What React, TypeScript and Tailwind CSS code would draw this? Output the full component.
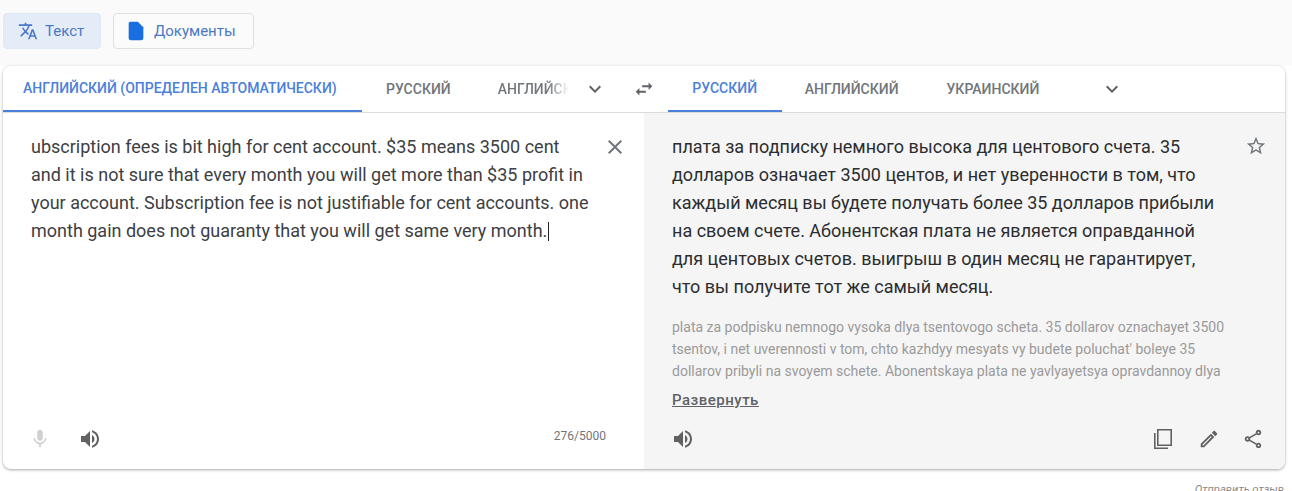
const iconPaths = {
  translate:
    "M12.87 15.07l-2.54-2.51.03-.03c1.74-1.94 2.98-4.17 3.71-6.53H17V4h-7V2H8v2H1v1.99h11.17C11.5 7.92 10.44 9.75 9 11.35 8.07 10.32 7.3 9.19 6.69 8h-2c.73 1.63 1.73 3.17 2.98 4.56l-5.09 5.02L4 19l5-5 3.11 3.11.76-2.04zM18.5 10h-2L12 22h2l1.12-3h4.75L21 22h2l-4.5-12zm-2.62 7l1.62-4.33L19.12 17h-3.24z",
  file: "M14 2H6c-1.1 0-2 .9-2 2v16c0 1.1.9 2 2 2h12c1.1 0 2-.9 2-2V8l-6-6z",
  swap: "M6.99 11L3 15l3.99 4v-3H14v-2H6.99v-3zM21 9l-3.99-4v3H10v2h7.01v3L21 9z",
  chevron: "M7.41 8.59L12 13.17l4.59-4.58L18 10l-6 6-6-6 1.41-1.41z",
  close: "M19 6.41L17.59 5 12 10.59 6.41 5 5 6.41 10.59 12 5 17.59 6.41 19 12 13.41 17.59 19 19 17.59 13.41 12 19 6.41z",
  star: "M22 9.24l-7.19-.62L12 2 9.19 8.63 2 9.24l5.46 4.73L5.82 21 12 17.27 18.18 21l-1.63-7.03L22 9.24zM12 15.4l-3.76 2.27 1-4.28-3.32-2.88 4.38-.38L12 6.1l1.71 4.04 4.38.38-3.32 2.88 1 4.28L12 15.4z",
  mic: "M12 14c1.66 0 3-1.34 3-3V5c0-1.66-1.34-3-3-3S9 3.34 9 5v6c0 1.66 1.34 3 3 3zm5.3-3c0 3-2.54 5.1-5.3 5.1S6.7 14 6.7 11H5c0 3.41 2.72 6.23 6 6.72V21h2v-3.28c3.28-.48 6-3.3 6-6.72h-1.7z",
  volume:
    "M3 9v6h4l5 5V4L7 9H3zm13.5 3c0-1.77-1.02-3.29-2.5-4.03v8.05c1.48-.73 2.5-2.25 2.5-4.02zM14 3.23v2.06c2.89.86 5 3.54 5 6.71s-2.11 5.85-5 6.71v2.06c4.01-.91 7-4.49 7-8.77s-2.99-7.86-7-8.77z",
  copy: "M5 2h15v17H5V2zm1.6 1.6v13.8h11.8V3.6H6.600zM2 6h1.600v14.400H16V22H2V6z",
  pen: "M14.06 9.02l.92.92L5.92 19H5v-.92l9.06-9.06M17.66 3c-.25 0-.51.1-.7.29l-1.83 1.83 3.75 3.75 1.83-1.83c.39-.39.39-1.02 0-1.41l-2.34-2.34c-.2-.2-.45-.29-.71-.29zm-3.6 3.19L3 17.25V21h3.75L17.81 9.94l-3.75-3.75z",
  share:
    "M18 16.08c-.76 0-1.44.3-1.96.77L8.91 12.7c.05-.23.09-.46.09-.7s-.04-.47-.09-.7l7.05-4.11c.54.5 1.25.81 2.04.81 1.66 0 3-1.34 3-3s-1.34-3-3-3-3 1.34-3 3c0 .24.04.47.09.7L8.04 9.81C7.5 9.31 6.79 9 6 9c-1.66 0-3 1.34-3 3s1.34 3 3 3c.79 0 1.5-.31 2.04-.81l7.12 4.16c-.05.21-.08.43-.08.65 0 1.61 1.31 2.92 2.92 2.92 1.61 0 2.92-1.31 2.92-2.92s-1.31-2.92-2.92-2.92zM18 4c.55 0 1 .45 1 1s-.45 1-1 1-1-.45-1-1 .45-1 1-1zM6 13c-.55 0-1-.45-1-1s.45-1 1-1 1 .45 1 1-.45 1-1 1zm12 7.02c-.55 0-1-.45-1-1s.45-1 1-1 1 .45 1 1-.45 1-1 1z",
};

function Icon({ name, className }: { name: keyof typeof iconPaths; className: string }) {
  return (
    <svg viewBox="0 0 24 24" fill="currentColor" className={`shrink-0 ${className}`}>
      <path d={iconPaths[name]} />
    </svg>
  );
}

const sourceLines = [
  "ubscription fees is bit high for cent account. $35 means 3500 cent",
  "and it is not sure that every month you will get more than $35 profit in",
  "your account. Subscription fee is not justifiable for cent accounts. one",
];

const resultLines = [
  "плата за подписку немного высока для центового счета. 35",
  "долларов означает 3500 центов, и нет уверенности в том, что",
  "каждый месяц вы будете получать более 35 долларов прибыли",
  "на своем счете. Абонентская плата не является оправданной",
  "для центовых счетов. выигрыш в один месяц не гарантирует,",
  "что вы получите тот же самый месяц.",
];

const translitLines = [
  "plata za podpisku nemnogo vysoka dlya tsentovogo scheta. 35 dollarov oznachayet 3500",
  "tsentov, i net uverennosti v tom, chto kazhdyy mesyats vy budete poluchat' boleye 35",
  "dollarov pribyli na svoyem schete. Abonentskaya plata ne yavlyayetsya opravdannoy dlya",
];

export default function App() {
  return (
    <div className="h-[491px] w-[1292px] overflow-hidden bg-white font-['Roboto',sans-serif]">
      {/* Mode buttons */}
      <div className="flex h-[66px] gap-3 bg-[#fafafa] px-[3px] pt-[13px]">
        <div className="flex h-9 w-[98px] items-center gap-[7px] rounded border border-[#dfe8f6] bg-[#e4ecf8] pl-[14px] text-[15px] text-[#4a78c8]">
          <Icon name="translate" className="h-5 w-5" />
          Текст
        </div>
        <div className="flex h-9 w-[141px] items-center gap-[7px] rounded border border-[#e0e0e0] bg-[#fbfbfb] pl-[11px] text-[15px] text-[#4a78c8]">
          <Icon name="file" className="h-[22px] w-[22px] text-[#1a6fe0]" />
          Документы
        </div>
      </div>

      {/* Translator card */}
      <div className="mx-[3px] h-[403px] w-[1282px] overflow-hidden rounded-lg bg-white shadow-[0_1px_3px_rgba(0,0,0,0.35)]">
        <div className="flex h-[47px] border-b border-[#dadce0] text-sm font-medium text-[#70757a]">
          <div className="flex h-[46px] w-[359px] items-center border-b-2 border-[#4a7fdc] pl-5 text-[#4a7fdc]">
            АНГЛИЙСКИЙ (ОПРЕДЕЛЕН АВТОМАТИЧЕСКИ)
          </div>
          <div className="ml-6 flex items-center">РУССКИЙ</div>
          <div className="ml-[47px] flex w-[71px] items-center overflow-hidden whitespace-nowrap bg-gradient-to-r from-[#70757a] from-70% to-transparent bg-clip-text text-transparent">
            АНГЛИЙСКИЙ
          </div>
          <div className="ml-[14px] flex items-center">
            <Icon name="chevron" className="h-6 w-6 text-[#5f6368]" />
          </div>
          <div className="ml-[26px] flex items-center">
            <Icon name="swap" className="h-[22px] w-[22px] text-[#5f6368]" />
          </div>
          <div className="ml-[13px] flex h-[46px] w-[114px] items-center justify-center border-b-2 border-[#4a7fdc] text-[#4a7fdc]">
            РУССКИЙ
          </div>
          <div className="ml-[23px] flex items-center">АНГЛИЙСКИЙ</div>
          <div className="ml-12 flex items-center">УКРАИНСКИЙ</div>
          <div className="ml-[61px] flex items-center">
            <Icon name="chevron" className="h-6 w-6 text-[#5f6368]" />
          </div>
        </div>

        <div className="flex h-[356px]">
          {/* Source panel */}
          <div className="flex w-[641px] flex-col pl-7 pr-[38px]">
            <div className="flex flex-1 justify-between pt-5">
              <div className="whitespace-nowrap text-lg leading-7 text-[#3c4043]">
                {sourceLines.map((line) => (
                  <div key={line}>{line}</div>
                ))}
                <div className="flex items-center">
                  month gain does not guaranty that you will get same very month.
                  <span className="ml-px h-[19px] w-px bg-[#202124]" />
                </div>
              </div>
              <Icon name="close" className="-mr-[21px] mt-[2px] h-6 w-6 text-[#70757a]" />
            </div>
            <div className="flex items-center pb-[18px]">
              <Icon name="mic" className="-ml-[2px] h-[22px] w-[22px] text-[#d0d0d0]" />
              <Icon name="volume" className="ml-[27px] h-6 w-6 text-[#616161]" />
              <span className="mb-[6px] ml-auto text-xs text-[#70757a]">276/5000</span>
            </div>
          </div>

          {/* Result panel */}
          <div className="flex flex-1 flex-col bg-[#f5f5f5] pl-7 pr-[18px]">
            <div className="flex flex-1 justify-between pt-5">
              <div className="whitespace-nowrap">
                <div className="text-lg leading-7 text-[#2b2d30]">
                  {resultLines.map((line) => (
                    <div key={line}>{line}</div>
                  ))}
                </div>
                <div className="mt-[15px] text-sm leading-[22px] text-[#9a9a9a]">
                  {translitLines.map((line) => (
                    <div key={line}>{line}</div>
                  ))}
                </div>
                <div className="mt-2 text-[15px] font-medium leading-5 tracking-[0.5px] text-[#5f6368] underline">
                  Развернуть
                </div>
              </div>
              <Icon name="star" className="mt-[2px] h-[22px] w-[22px] text-[#70757a]" />
            </div>
            <div className="mr-[3px] flex items-center pb-[18px] text-[#616161]">
              <Icon name="volume" className="-ml-[1px] h-6 w-6" />
              <Icon name="copy" className="ml-auto h-6 w-6" />
              <Icon name="pen" className="ml-[22px] h-[22px] w-[22px]" />
              <Icon name="share" className="ml-[22px] h-[22px] w-[22px]" />
            </div>
          </div>
        </div>
      </div>

      <div className="mt-[13px] pr-2 text-right text-[11.25px] italic text-[#8a8a8a]">Отправить отзыв</div>
    </div>
  );
}
